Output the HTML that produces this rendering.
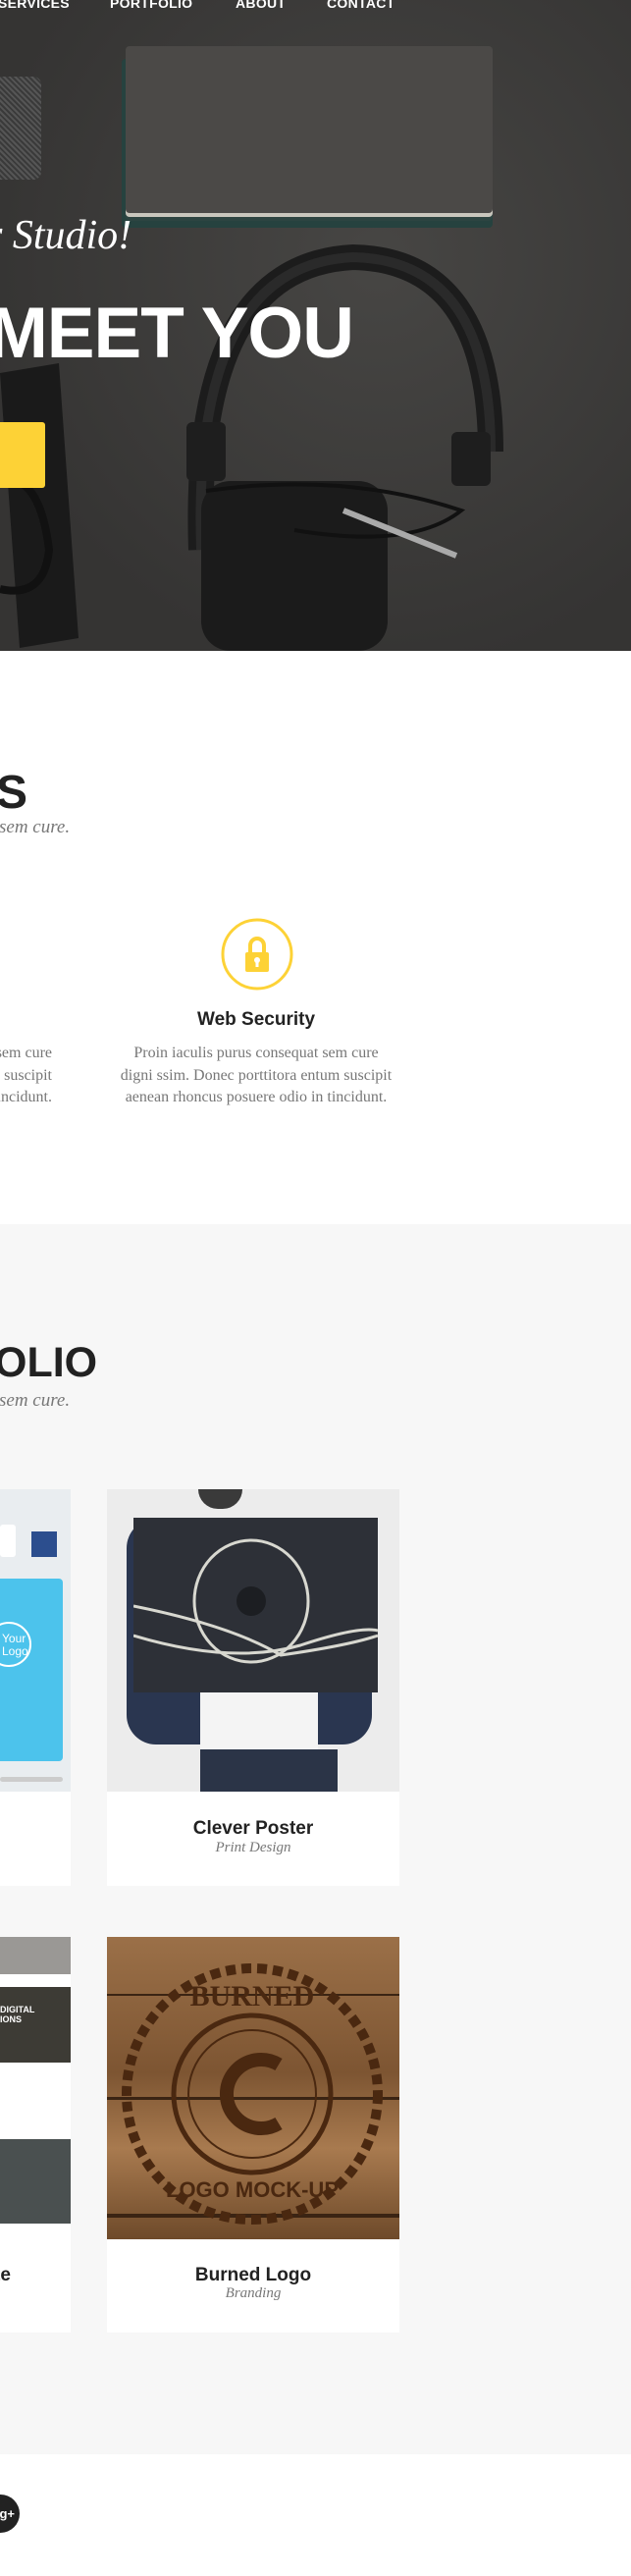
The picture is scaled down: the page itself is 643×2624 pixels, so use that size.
<!DOCTYPE html>
<html><head><meta charset="utf-8"><style>
*{margin:0;padding:0;box-sizing:border-box}
html,body{overflow:hidden}
body{width:643px;height:2624px;background:#fff;position:relative;font-family:"Liberation Sans",sans-serif}
.a{position:absolute}
.nav{top:-5px;color:#fff;font-weight:bold;font-size:14px;letter-spacing:.3px}
.serif{font-family:"Liberation Serif",serif}
.t{font-weight:bold;color:#222;text-align:center}
.p{font-family:"Liberation Serif",serif;color:#777;font-size:16px;line-height:22.5px;text-align:center;white-space:nowrap}
</style></head><body>
<div class="a" style="left:0;top:0;width:643px;height:2624px;overflow:hidden">
<!-- HERO -->
<div class="a" style="left:0;top:0;width:643px;height:663px;background:radial-gradient(ellipse at 60% 40%,#474644,#353433 75%);overflow:hidden">
 <div class="a" style="left:0;top:78px;width:42px;height:105px;background:repeating-linear-gradient(45deg,#555 0 2px,#3a3a3a 2px 4px);border-radius:0 8px 8px 0"></div>
 <div class="a" style="left:124px;top:60px;width:378px;height:172px;background:#26423f;border-radius:4px"></div>
 <div class="a" style="left:128px;top:47px;width:374px;height:170px;background:#4b4947;border-radius:4px;box-shadow:0 4px 0 #c9c6bd,0 8px 0 #2d4441"></div>
 <svg class="a" style="left:0;top:0" width="643" height="663">
  <path d="M205 560 Q195 270 360 262 Q500 265 500 460" fill="none" stroke="#1c1c1c" stroke-width="26"/>
  <path d="M205 560 Q195 270 360 262 Q500 265 500 460" fill="none" stroke="#2a2a2a" stroke-width="10"/>
  <rect x="190" y="430" width="40" height="60" rx="6" fill="#1e1e1e"/>
  <rect x="460" y="440" width="40" height="55" rx="6" fill="#1e1e1e"/>
  <rect x="205" y="490" width="190" height="173" rx="30" fill="#1b1b1b"/>
  <path d="M210 500 Q350 480 470 520 Q420 560 300 540" fill="none" stroke="#111" stroke-width="4"/>
  <path d="M350 520 L465 566" stroke="#aaa" stroke-width="6"/>
  <path d="M0 380 L60 370 L80 650 L20 660 Z" fill="#1a1a1a"/>
  <path d="M0 490 Q40 480 50 560 Q45 610 0 600" fill="none" stroke="#111" stroke-width="8"/>
 </svg>
 <div class="a nav" style="left:-2px">SERVICES</div>
 <div class="a nav" style="left:112px">PORTFOLIO</div>
 <div class="a nav" style="left:240px">ABOUT</div>
 <div class="a nav" style="left:333px">CONTACT</div>
 <div class="a serif" style="left:-14px;top:216px;color:#fff;font-size:42px;font-style:italic">r Studio!</div>
 <div class="a" style="left:-12px;top:298px;color:#fff;font-size:73px;font-weight:bold;letter-spacing:-1px">MEET YOU</div>
 <div class="a" style="left:0;top:430px;width:46px;height:67px;background:#fdd236;border-radius:0 3px 3px 0"></div>
</div>
<!-- SERVICES -->
<div class="a" style="left:-4px;top:780px;font-size:48px;font-weight:bold;color:#222">S</div>
<div class="a serif" style="left:-1px;top:832px;font-size:19px;font-style:italic;color:#777">sem cure.</div>
<svg class="a" style="left:224px;top:934px" width="76" height="76"><circle cx="38" cy="38" r="35" fill="none" stroke="#fdd236" stroke-width="3"/>
 <path d="M31 36 V29 A7 7 0 0 1 45 29 V36" fill="none" stroke="#fdd236" stroke-width="4"/>
 <rect x="26" y="36" width="24" height="20" rx="2" fill="#fdd236"/><circle cx="38" cy="44" r="3" fill="#fff"/><rect x="36.5" y="45" width="3" height="6" fill="#fff"/></svg>
<div class="a t" style="left:111px;width:300px;top:1028px;font-size:19px">Web Security</div>
<div class="a p" style="left:111px;width:300px;top:1062px">Proin iaculis purus consequat sem cure<br>digni ssim. Donec porttitora entum suscipit<br>aenean rhoncus posuere odio in tincidunt.</div>
<div class="a p" style="left:-247px;width:300px;top:1062px;text-align:right">consequat sem cure<br>porttitora entum suscipit<br>odio in tincidunt.</div>
<!-- PORTFOLIO -->
<div class="a" style="left:0;top:1247px;width:643px;height:1253px;background:#f7f7f7"></div>
<div class="a" style="left:-6px;top:1364px;font-size:43px;font-weight:bold;color:#222">OLIO</div>
<div class="a serif" style="left:-1px;top:1416px;font-size:19px;font-style:italic;color:#777">sem cure.</div>
<div class="a" style="left:0;top:1517px;width:72px;height:404px;background:#fff"></div>
<div class="a" style="left:0;top:1517px;width:72px;height:308px;background:#e9edf0"></div>
<div class="a" style="left:0;top:1553px;width:16px;height:33px;background:#fff;border-radius:3px"></div>
<div class="a" style="left:32px;top:1560px;width:26px;height:26px;background:#2c4e8e"></div>
<div class="a" style="left:0;top:1608px;width:64px;height:186px;background:#4cc3ec;border-radius:0 4px 4px 0"></div>
<div class="a" style="left:-14px;top:1652px;width:46px;height:46px;border:2px solid #fff;border-radius:50%;color:#fff;font-size:12px;line-height:13px;padding:9px 0 0 14px">Your<br>Logo</div>
<div class="a" style="left:0;top:1810px;width:64px;height:5px;background:#ccc;border-radius:3px"></div>
<div class="a" style="left:109px;top:1517px;width:298px;height:404px;background:#fff"></div>
<div class="a" style="left:109px;top:1517px;width:298px;height:308px;background:#ececec;overflow:hidden">
 <div class="a" style="left:93px;top:0;width:45px;height:20px;background:#3a3a3a;border-radius:0 0 20px 20px"></div>
 <div class="a" style="left:20px;top:30px;width:250px;height:230px;background:#2a3650;border-radius:30px"></div>
 <div class="a" style="left:95px;top:190px;width:120px;height:80px;background:#f4f4f4"></div>
 <div class="a" style="left:95px;top:265px;width:140px;height:43px;background:#2b3447"></div>
 <div class="a" style="left:27px;top:29px;width:249px;height:178px;background:#2d3037"></div>
 <svg class="a" style="left:27px;top:29px" width="249" height="178"><g fill="none" stroke="#d8d8d0" stroke-width="3"><ellipse cx="120" cy="85" rx="58" ry="62"/><path d="M0 90 Q100 110 150 140 Q220 130 249 120"/><path d="M0 120 Q100 150 170 130 Q230 110 249 115"/></g><circle cx="120" cy="85" r="15" fill="#1c1e22"/></svg>
</div>
<div class="a t" style="left:109px;width:298px;top:1852px;font-size:19px">Clever Poster</div>
<div class="a serif" style="left:109px;width:298px;top:1874px;font-size:15px;font-style:italic;color:#777;text-align:center">Print Design</div>
<div class="a" style="left:0;top:1973px;width:72px;height:403px;background:#fff"></div>
<div class="a" style="left:0;top:1973px;width:72px;height:38px;background:#9a9895"></div>
<div class="a" style="left:0;top:2024px;width:72px;height:77px;background:#3d3b35;color:#fff;font-size:9px;font-weight:bold;padding:18px 0 0 0">DIGITAL<br>IONS</div>
<div class="a" style="left:0;top:2179px;width:72px;height:86px;background:#4a5050"></div>
<div class="a" style="left:-6px;top:2307px;font-size:19px;font-weight:bold;color:#222">te</div>
<div class="a" style="left:109px;top:1973px;width:298px;height:403px;background:#fff"></div>
<div class="a" style="left:109px;top:1973px;width:298px;height:308px;background:linear-gradient(180deg,#9b7048,#7d5532 45%,#a87a4f 70%,#6e4a2a);overflow:hidden">
 <div class="a" style="left:0;top:58px;width:298px;height:2px;background:#3b2413"></div>
 <div class="a" style="left:0;top:163px;width:298px;height:3px;background:#3b2413"></div>
 <div class="a" style="left:0;top:282px;width:298px;height:4px;background:#3b2413"></div>
 <svg class="a" style="left:0;top:0" width="298" height="308"><g fill="none" stroke="#4a2810"><circle cx="148" cy="160" r="128" stroke-width="10" stroke-dasharray="10 6"/><circle cx="148" cy="160" r="80" stroke-width="5"/><circle cx="148" cy="160" r="65" stroke-width="2"/><path d="M175 130 A35 35 0 1 0 175 190" stroke-width="14"/></g>
 <text x="148" y="70" text-anchor="middle" font-family="Liberation Serif" font-weight="bold" font-size="30" fill="#4a2810">BURNED</text>
 <text x="148" y="265" text-anchor="middle" font-family="Liberation Sans" font-weight="bold" font-size="22" fill="#4a2810">LOGO MOCK-UP</text></svg>
</div>
<div class="a t" style="left:109px;width:298px;top:2307px;font-size:19px">Burned Logo</div>
<div class="a serif" style="left:109px;width:298px;top:2328px;font-size:15px;font-style:italic;color:#777;text-align:center">Branding</div>
<div class="a" style="left:-19px;top:2541px;width:39px;height:39px;border-radius:50%;background:#222;color:#fff;font-size:13px;font-weight:bold;line-height:39px;text-align:right;padding-right:5px">g+</div>
</div>
</body></html>
